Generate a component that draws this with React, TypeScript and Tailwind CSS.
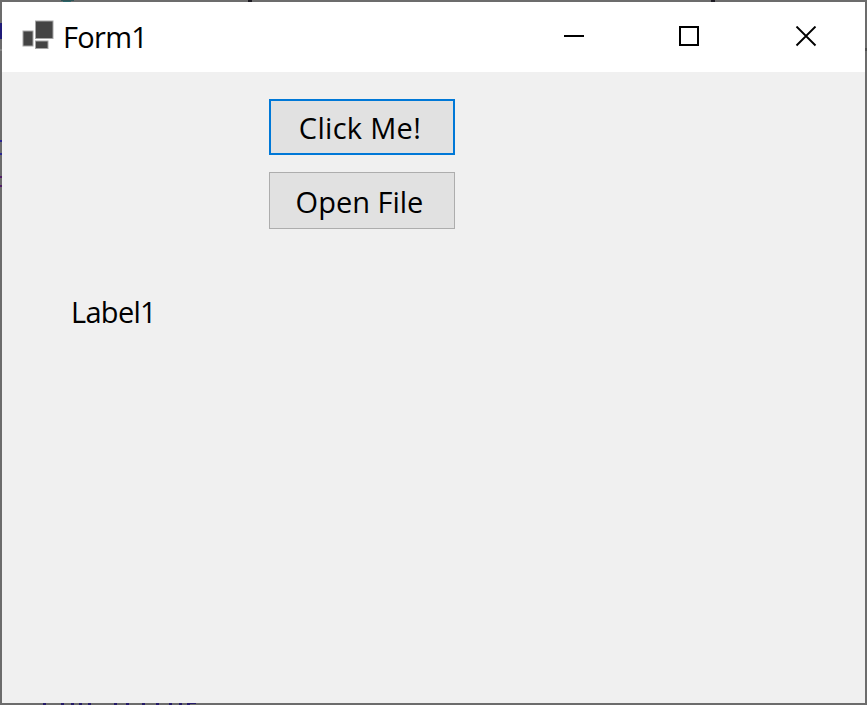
type Mark = { x: number; y: number; w: number; h: number; c: string };

// Slivers of the editor behind the window that show through its translucent frame.
const marks: Mark[] = [
  { x: 61, y: 0, w: 13, h: 1, c: '#2f5557' },
  { x: 63, y: 1, w: 8, h: 1, c: '#2b6468' },
  { x: 248, y: 0, w: 4, h: 2, c: '#1c1a22' },
  { x: 711, y: 0, w: 4, h: 2, c: '#1c1a22' },
  { x: 0, y: 23, w: 2, h: 16, c: '#1f1b78' },
  { x: 0, y: 49, w: 2, h: 2, c: '#858585' },
  { x: 0, y: 140, w: 2, h: 2, c: '#2a2590' },
  { x: 0, y: 153, w: 2, h: 2, c: '#2a2590' },
  { x: 0, y: 176, w: 2, h: 2, c: '#511c66' },
  { x: 0, y: 185, w: 2, h: 2, c: '#511c66' },
  { x: 865, y: 48, w: 2, h: 3, c: '#4d4d4d' },
  ...[43, 61, 71, 79, 88, 114, 126, 142, 156, 169, 179, 187].map((x) => ({
    x, y: 703, w: 3, h: 2, c: '#251b68',
  })),
  { x: 189, y: 703, w: 7, h: 1, c: '#251b68' },
];

function FrameMarks() {
  return (
    <svg className="pointer-events-none absolute -left-[2px] -top-[2px]" width="867" height="705" shapeRendering="crispEdges" aria-hidden="true">
      {marks.map((m, i) => (
        <rect key={i} x={m.x} y={m.y} width={m.w} height={m.h} fill={m.c} />
      ))}
    </svg>
  );
}

function TitleBar() {
  return (
    <header className="flex h-[70px] shrink-0 items-start bg-white">
      <svg className="ml-5 mt-4 shrink-0" width="34" height="34" viewBox="0 0 34 34" aria-hidden="true">
        <g fill="#444444" stroke="#a5a5a5" strokeWidth="1">
          <rect x="13.5" y="3" width="17.5" height="17.5" />
          <rect x="1" y="13" width="10" height="15" />
          <rect x="13.5" y="23" width="12.5" height="7.5" />
        </g>
      </svg>
      <h1 className="ml-[7px] mt-[15px] w-[100px] whitespace-nowrap text-[29px] leading-10 tracking-[-0.7px]">Form1</h1>
      <div className="ml-auto flex h-[70px] items-start pt-6">
        <button className="mr-[95px] block" aria-label="Minimize">
          <svg width="20" height="20" shapeRendering="crispEdges"><path d="M0 10h20" stroke="#000" strokeWidth="2" /></svg>
        </button>
        <button className="mr-[96px] block" aria-label="Maximize">
          <svg width="20" height="20" shapeRendering="crispEdges"><path d="M1 1h18v18H1z" stroke="#000" strokeWidth="2" fill="none" /></svg>
        </button>
        <button className="mr-[48px] block" aria-label="Close">
          <svg width="22" height="22"><path d="M1.5 0.5l19 19M20.5 0.5l-19 19" stroke="#000" strokeWidth="1.9" /></svg>
        </button>
      </div>
    </header>
  );
}

export default function App() {
  return (
    <div className="relative flex h-[705px] w-[867px] flex-col border-2 border-[#6c6c6c] bg-[#f0f0f0] font-['Open_Sans','Noto_Sans',sans-serif] text-[29px] text-black">
      <TitleBar />
      <main className="flex flex-1 flex-col items-start">
        <div className="ml-[267px] mt-[27px] flex w-[186px] flex-col gap-[17px]">
          <button className="flex h-14 items-center justify-center whitespace-nowrap border-2 border-[#0078d7] bg-[#e1e1e1] pr-1 pt-[2px] leading-10 tracking-[0.3px]">
            Click Me!
          </button>
          <button className="flex h-[57px] items-center justify-center whitespace-nowrap border border-[#adadad] bg-[#e1e1e1] pr-[5px] pt-[2px] leading-10">
            Open File
          </button>
        </div>
        <label className="ml-[69px] mt-[63px] block leading-10 tracking-[-0.7px]">Label1</label>
      </main>
      <FrameMarks />
    </div>
  );
}
